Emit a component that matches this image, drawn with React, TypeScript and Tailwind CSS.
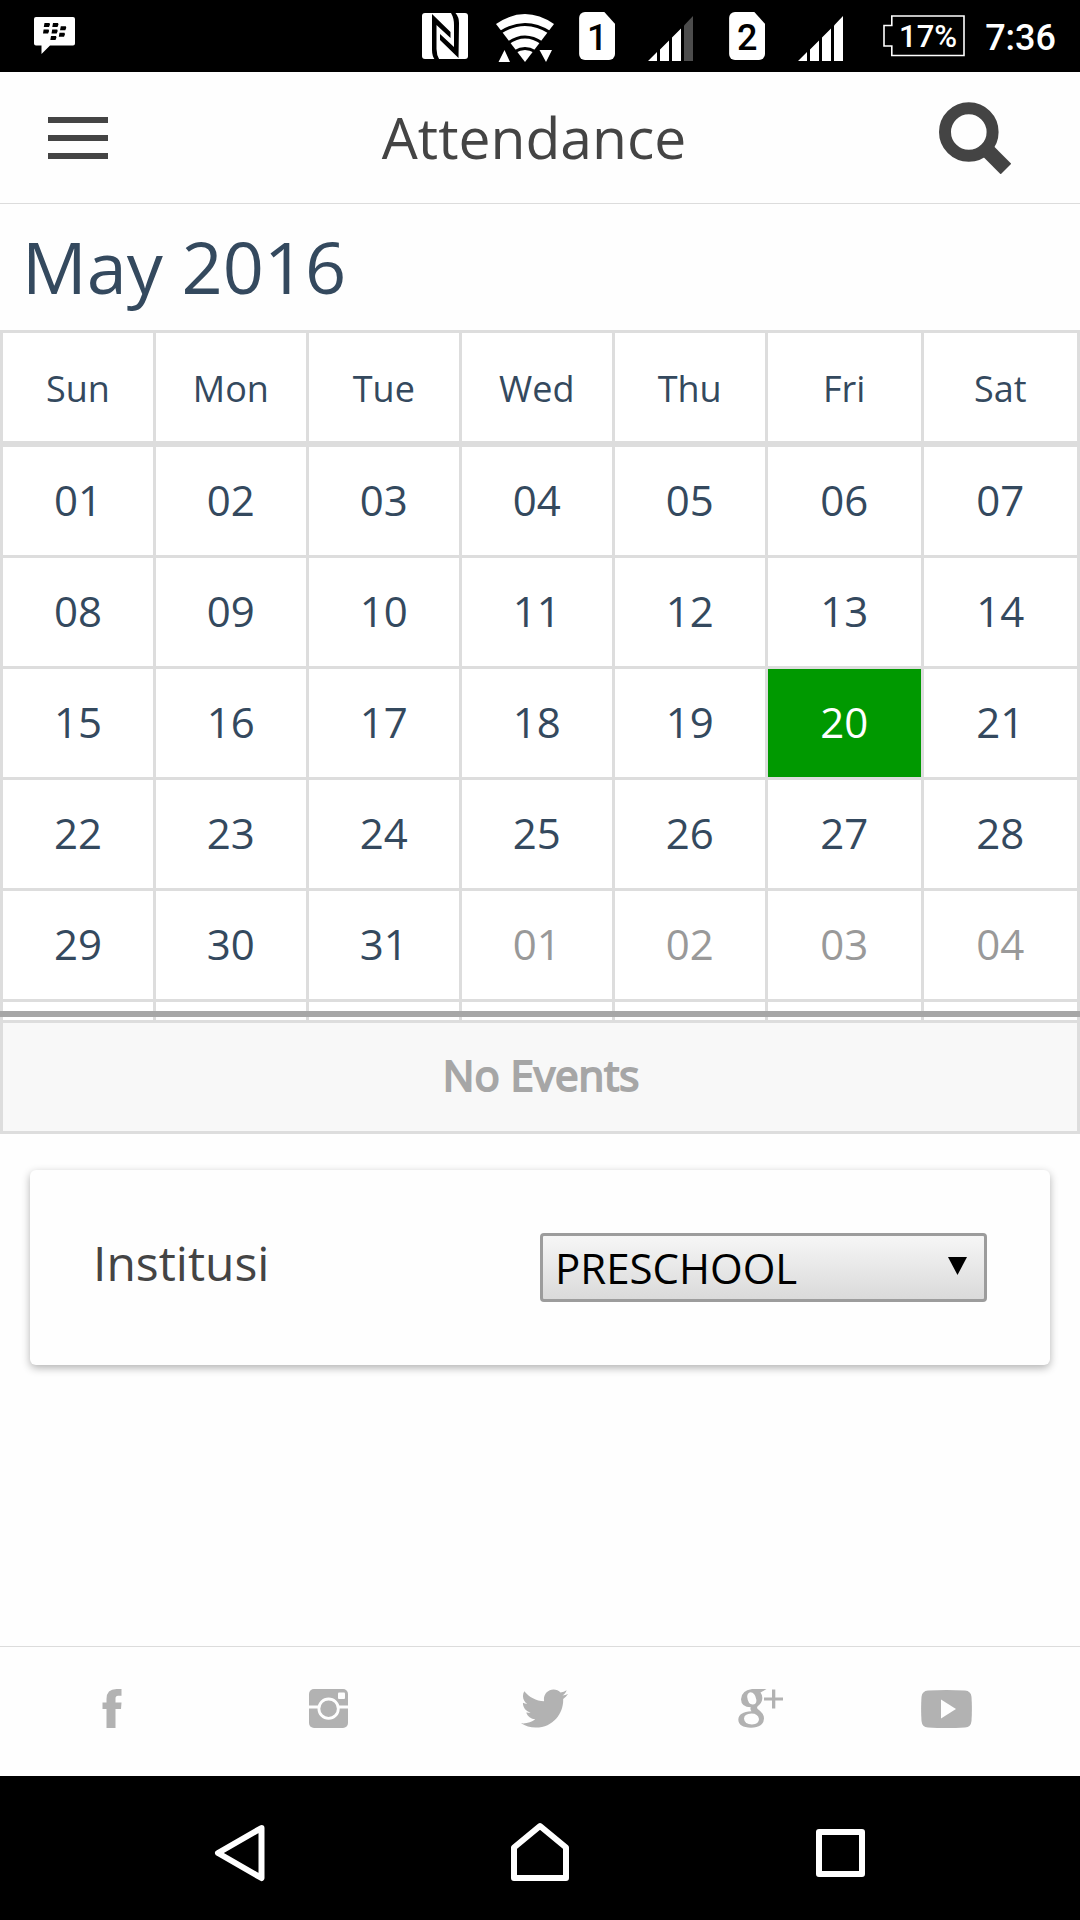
import type { ReactNode } from 'react';
import { FaTwitter } from 'react-icons/fa';

const weekdays = ['Sun', 'Mon', 'Tue', 'Wed', 'Thu', 'Fri', 'Sat'];

const weeks = [
  ['01', '02', '03', '04', '05', '06', '07'],
  ['08', '09', '10', '11', '12', '13', '14'],
  ['15', '16', '17', '18', '19', '20', '21'],
  ['22', '23', '24', '25', '26', '27', '28'],
  ['29', '30', '31', '01', '02', '03', '04'],
];

const today = '20';

function MessengerIcon() {
  return (
    <svg width="42" height="38" viewBox="0 0 42 38" aria-hidden="true">
      <path d="M2 0h37a2 2 0 0 1 2 2v24.500a2 2 0 0 1-2 2H16L7.500 37v-8.500H2a2 2 0 0 1-2-2V2a2 2 0 0 1 2-2z" fill="#fff" />
      <g fill="#000">
        <path d="M10.500 6h5l.5 1.500-1 2.500h-5.200zM19 6h5l.5 1.500-1 2.500h-5.200zM9.600 12.500h5l.5 1.500-1 2.500H9zM18.200 12.500h5l.5 1.500-1 2.500h-5.200zM26.800 9.300h5l.5 1.500-1 2.500H26zM25.500 15.800h5l.5 1.500-1 2.500h-5.200zM17 19h5l.5 1.500-1 2.500h-5.200z" />
      </g>
    </svg>
  );
}

function NfcIcon() {
  return (
    <svg width="46" height="47" viewBox="0 0 46 47" aria-hidden="true">
      <rect width="46" height="46" rx="3" fill="#fff" />
      <path d="M10 1 28.500 19v6L14.500 12v24q0 6 3 11h-4.500q-3-4-3-10z" fill="#000" />
      <path d="M36.500 45 18 27v-6L32 34V12q0-7-3-12h4.500q3.500 4 3.500 10z" fill="#000" />
    </svg>
  );
}

function WifiIcon() {
  return (
    <svg width="58" height="48" viewBox="0 0 58 48" aria-hidden="true">
      <path d="M0 10Q29-10 58 10L29 48z" fill="#fff" />
      <g fill="none" stroke="#000" strokeWidth="3">
        <path d="M4 18.500Q29 2.500 54 18.500M12 29Q29 17 46 29M19 37.500Q29 31.500 39 37.500" />
      </g>
      <path d="M8.500 36 14 48H2.500zM43.500 36H56l-6 12z" fill="#fff" />
    </svg>
  );
}

function SignalIcon({ weak }: { weak?: boolean }) {
  return (
    <svg width="45" height="45" viewBox="0 0 45 45" aria-hidden="true">
      <path d="M0 45 9 36v9zM12 33.500l9-9V45h-9zM24 21.500l9-9V45h-9z" fill="#fff" />
      <path d="M36 9.500 45 0v45h-9z" fill={weak ? '#4c4c4c' : '#fff'} />
    </svg>
  );
}

function Sim({ children }: { children: ReactNode }) {
  return (
    <span className="flex h-12 w-9 items-center justify-center rounded-md bg-white pt-1 text-4xl leading-none text-black [clip-path:polygon(0_0,70%_0,100%_25%,100%_100%,0_100%)]">
      {children}
    </span>
  );
}

function StatusBar() {
  return (
    <div className="flex h-18 items-center justify-between bg-black pr-6 pl-[34px] font-[Roboto,sans-serif] font-medium text-white">
      <MessengerIcon />
      <div className="flex items-center">
        <NfcIcon />
        <span className="mt-1 ml-7"><WifiIcon /></span>
        <span className="ml-[25px]"><Sim>1</Sim></span>
        <span className="mt-1 ml-[33px]"><SignalIcon weak /></span>
        <span className="ml-9"><Sim>2</Sim></span>
        <span className="mt-1 ml-[33px]"><SignalIcon /></span>
        <div className="relative ml-10 flex h-[42px] w-[82px] items-center justify-end pr-2 text-[31px] leading-none">
          <svg className="absolute inset-0" width="82" height="42" viewBox="0 0 82 42" aria-hidden="true">
            <path d="M8.800 1H81v39.500H8.800V31H1V10.500h7.800z" fill="none" stroke="#fff" strokeWidth="1.600" />
          </svg>
          <span>17%</span>
        </div>
        <span className="mt-1 ml-5 text-4xl leading-none">7:36</span>
      </div>
    </div>
  );
}

function Header() {
  return (
    <header className="flex h-[132px] items-center border-b border-[#dcdcdc]">
      <div className="w-[156px] pl-12">
        <button aria-label="Menu" className="flex w-15 flex-col gap-3">
          <span className="h-1.5 bg-[#444]" />
          <span className="h-1.5 bg-[#444]" />
          <span className="h-1.5 bg-[#444]" />
        </button>
      </div>
      <h1 className="flex-1 text-center text-[57px] leading-none text-[#444]">Attendance</h1>
      <div className="w-[168px] pl-[27px]">
        <button aria-label="Search" className="block">
          <svg width="72" height="72" viewBox="0 0 72 72" fill="none" stroke="#444" aria-hidden="true">
            <circle cx="29.800" cy="30" r="23.800" strokeWidth="12" />
            <path d="M48 48 67 67" strokeWidth="15" />
          </svg>
        </button>
      </div>
    </header>
  );
}

function Calendar() {
  return (
    <section>
      <h2 className="flex h-[126px] items-center px-[22px] pb-0.5 text-7xl leading-none text-[#34495e]">May 2016</h2>
      <div className="relative">
        <table className="w-full table-fixed border-separate border-spacing-0 border-t-3 border-l-3 border-[#ddd] bg-white text-center leading-none text-[#34495e]">
          <colgroup>
            <col className="w-[14.2%]" />
            <col className="w-[14.2%]" />
            <col className="w-[14.2%]" />
            <col className="w-[14.2%]" />
            <col className="w-[14.2%]" />
            <col className="w-[14.5%]" />
            <col className="w-[14.5%]" />
          </colgroup>
          <thead>
            <tr>
              {weekdays.map((day) => (
                <th key={day} scope="col" className="h-[114px] border-r-3 border-b-6 border-[#ddd] p-0 pt-1 text-4xl leading-none font-normal">
                  {day}
                </th>
              ))}
            </tr>
          </thead>
          <tbody>
            {weeks.map((week, row) => (
              <tr key={row}>
                {week.map((date, column) => {
                  const nextMonth = row === 4 && column > 2;
                  const tone = date === today ? 'bg-[#009900] text-white' : nextMonth ? 'text-[#999]' : '';
                  return (
                    <td key={column} className={`h-[111px] border-r-3 border-b-3 border-[#ddd] p-0 pb-0.5 text-[42px] ${tone}`}>
                      {date}
                    </td>
                  );
                })}
              </tr>
            ))}
            <tr>
              {weekdays.map((day) => (
                <td key={day} className="h-[18px] border-r-3 border-[#ddd] p-0" />
              ))}
            </tr>
          </tbody>
        </table>
        <div className="absolute inset-x-0 bottom-[3px] h-1.5 bg-[#a6a6a6]" />
      </div>
      <p className="flex h-[114px] items-center justify-center border-3 border-[#ddd] bg-[#f8f8f8] pb-1 pl-0.5 text-[42px] leading-none text-[#a6a6a6] [-webkit-text-stroke:2px_#a6a6a6]">
        No Events
      </p>
    </section>
  );
}

function InstitutionCard() {
  return (
    <section className="mx-[30px] mt-9 grid grid-cols-2 items-center rounded-md bg-[#fefefe] p-[63px] shadow-[0_3px_9px_rgba(0,0,0,0.3)]">
      <label htmlFor="institution" className="pb-2.5 text-5xl leading-none text-[#444]">Institusi</label>
      <div className="relative">
        <select
          id="institution"
          className="block h-[69px] w-full appearance-none rounded border-3 border-[#9c9c9c] bg-linear-to-b from-[#f6f6f6] to-[#dadada] pl-3 text-[42px] leading-none text-black"
        >
          <option>PRESCHOOL</option>
        </select>
        <svg className="pointer-events-none absolute top-6 right-5" width="19" height="18" viewBox="0 0 19 18" aria-hidden="true">
          <path d="M0 0h19L9.500 18z" />
        </svg>
      </div>
    </section>
  );
}

function FacebookIcon() {
  return (
    <svg width="20" height="39" viewBox="0 0 20 39" aria-hidden="true">
      <path d="M4.500 39V20H.5V13.500h4V10Q4.500 0 14.500 0h5v6.700H16Q13.500 6.700 13.500 9.500v4h6L19 20h-5.500v19z" fill="currentColor" />
    </svg>
  );
}

function InstagramIcon() {
  return (
    <svg width="39" height="39" viewBox="0 0 39 39" aria-hidden="true">
      <rect width="39" height="39" rx="5" fill="currentColor" />
      <path d="M0 18h39" stroke="#fefefe" strokeWidth="3" />
      <circle cx="19.600" cy="19.700" r="9.700" fill="currentColor" stroke="#fefefe" strokeWidth="2.800" />
      <rect x="29" y="3.500" width="7" height="6.500" rx="1" fill="#fefefe" />
    </svg>
  );
}

function GooglePlusIcon() {
  return (
    <svg width="45" height="39" viewBox="0 0 45 39" fill="currentColor" aria-hidden="true">
      <path
        fillRule="evenodd"
        d="M14 0H28.500L22.500 3.500Q24.500 6 24.300 9.500 24 14 19.700 17.300 18.300 18.800 20 20.300 26 24.500 26 29.500 25.500 38.500 13 38.700 .5 38.500 .3 30.500 .5 23 13.500 22.300 11.800 20.500 12.800 18.300 3.200 18.300 3 10.300 3.200 1.500 14 0zM12.500 3.300Q9 4 9.200 8 10 15.500 14.700 15.600 19 15.200 18.300 10.500 17 3.500 12.500 3.300zM13.500 24.500Q6 24.800 6 29.800 6.500 35.200 14 35.500 21 35.200 21 30 20 24.500 13.500 24.500z"
      />
      <path d="M34 .5h3.300v8H45v3h-7.700v8H34v-8h-8v-3h8z" />
    </svg>
  );
}

function YoutubeIcon() {
  return (
    <svg width="51" height="38" viewBox="0 0 51 38" aria-hidden="true">
      <path d="M7 .5Q25.500-.5 44 .5 50 1 50.500 7 51.300 19 50.500 31 50 37 44 37.500 25.500 38.500 7 37.500 1 37 .5 31-.3 19 .5 7 1 1 7 .5z" fill="currentColor" />
      <path d="M20 9.500 35 19 20 28.500z" fill="#fefefe" />
    </svg>
  );
}

function SocialLinks() {
  const links = [
    { name: 'Facebook', icon: <FacebookIcon /> },
    { name: 'Instagram', icon: <InstagramIcon /> },
    { name: 'Twitter', icon: <FaTwitter className="h-[47px] w-[47px]" /> },
    { name: 'Google Plus', icon: <GooglePlusIcon /> },
    { name: 'YouTube', icon: <YoutubeIcon /> },
  ];
  return (
    <footer className="grid h-[130px] grid-cols-[216fr_216fr_216fr_216fr_156fr] items-center border-t border-[#dcdcdc] pr-14 pb-3 pl-1 pt-1.5 text-[#b2b2b2]">
      {links.map((link) => (
        <a key={link.name} href="#" aria-label={link.name} className="flex justify-center">
          {link.icon}
        </a>
      ))}
    </footer>
  );
}

function NavigationBar() {
  const items = [
    { name: 'Back', shape: <path d="M57.500 16 14 41 57.500 66z" /> },
    { name: 'Home', shape: <path d="M36 14 62 35.500V66H10V35.500z" /> },
    { name: 'Recent apps', shape: <rect x="15" y="20" width="43" height="42" /> },
  ];
  return (
    <nav className="grid h-36 grid-cols-3 items-center bg-black px-[90px]">
      {items.map((item) => (
        <button key={item.name} aria-label={item.name} className="flex justify-center">
          <svg width="72" height="72" viewBox="0 0 72 72" fill="none" stroke="#fff" strokeWidth="6" strokeLinejoin="round" aria-hidden="true">
            {item.shape}
          </svg>
        </button>
      ))}
    </nav>
  );
}

export default function App() {
  return (
    <div className="flex min-h-screen flex-col bg-[#fefefe] font-['Open_Sans',sans-serif]">
      <StatusBar />
      <Header />
      <main className="flex-1">
        <Calendar />
        <InstitutionCard />
      </main>
      <SocialLinks />
      <NavigationBar />
    </div>
  );
}
